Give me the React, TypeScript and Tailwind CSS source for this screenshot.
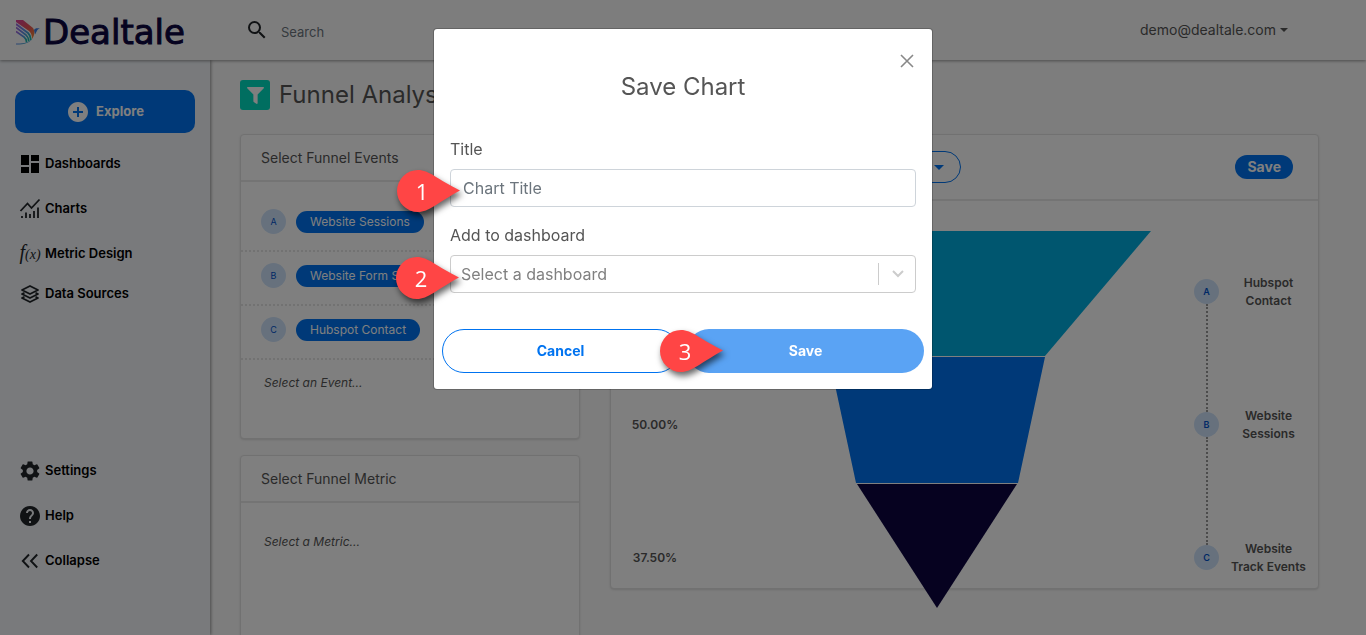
import type { ReactNode } from "react";
import { FaFilter } from "react-icons/fa";
import { MdAddCircle, MdDashboard, MdHelp, MdSearch, MdSettings } from "react-icons/md";

const events = [
  { key: "A", name: "Website Sessions" },
  { key: "B", name: "Website Form Submit" },
  { key: "C", name: "Hubspot Contact" },
];

const steps = [
  { key: "A", name: ["Hubspot", "Contact"], percent: "100.00%" },
  { key: "B", name: ["Website", "Sessions"], percent: "50.00%" },
  { key: "C", name: ["Website", "Track Events"], percent: "37.50%" },
];

function Caret({ className }: { className: string }) {
  return (
    <svg viewBox="0 0 8 4" className={className} fill="currentColor" aria-hidden="true">
      <path d="M0 0h8L4 4z" />
    </svg>
  );
}

function ChartsIcon() {
  return (
    <svg width="24" height="24" viewBox="0 0 24 24" fill="none" stroke="currentColor" aria-hidden="true">
      <path d="M2.5 14 9.5 6.5l4 4.5 8-8.5" strokeWidth="1.8" />
      <path d="M4 19v2M8 15.5v5.5M12 17v4M16 14v7M20 10.5v10.5" strokeWidth="1.8" />
    </svg>
  );
}

function LayersIcon() {
  return (
    <svg width="24" height="24" viewBox="0 0 24 24" fill="none" stroke="currentColor" strokeWidth="1.8" strokeLinejoin="round" aria-hidden="true">
      <path d="M12 4l8 4-8 4-8-4z" />
      <path d="M6.500 10.800 4 12l8 4 8-4-2.500-1.200" />
      <path d="M6.500 14.800 4 16l8 4 8-4-2.500-1.200" />
    </svg>
  );
}

function CollapseIcon() {
  return (
    <svg width="24" height="24" viewBox="0 0 24 24" fill="none" stroke="currentColor" strokeWidth="1.9" aria-hidden="true">
      <path d="M11 5.500 4.800 12l6.200 6.500M19.200 5.500 13 12l6.200 6.500" />
    </svg>
  );
}

function Bird() {
  return (
    <svg width="24" height="25" viewBox="0 0 24 25" fill="none" aria-hidden="true">
      <defs>
        <linearGradient id="wing" x1="0" y1="0" x2="1" y2="1">
          <stop offset="0" stopColor="#d83f9c" />
          <stop offset="0.5" stopColor="#e8505a" />
          <stop offset="1" stopColor="#f08a2c" />
        </linearGradient>
        <linearGradient id="feather" x1="0" y1="0" x2="1" y2="1">
          <stop offset="0" stopColor="#a35fd8" />
          <stop offset="0.5" stopColor="#5a8fe8" />
          <stop offset="1" stopColor="#12bfa0" />
        </linearGradient>
      </defs>
      <path d="M0 0h7l10 8c2 3 2 7-1 11 0-4-1-6-3-8L0 2z" fill="url(#wing)" />
      <path d="M0 4l12 9c2 2 3 4 2.500 7" stroke="url(#feather)" strokeWidth="1.8" />
      <path d="M0 7.500l10 7.500c2 2 3 3 2.500 6" stroke="url(#feather)" strokeWidth="1.7" />
      <path d="M0 11.500l8 5.500c2 1.500 2.500 2.500 2.500 5" stroke="url(#feather)" strokeWidth="1.6" />
      <path d="M0 23.500c5 0 12 0 16-5-2 4-7 6-16 6z" fill="url(#feather)" />
      <path d="M18 10c1-2 3-2 6-1.500-3 .5-3 3-5 6z" fill="#3f7fe0" />
    </svg>
  );
}

function NavItem({ icon, label, short }: { icon: ReactNode; label: string; short?: boolean }) {
  return (
    <a href="#" className={`flex items-center gap-[3px] pl-[18px] text-[13px] font-semibold text-black ${short ? "h-[35px]" : "h-[45px]"}`}>
      <span className="flex w-6 justify-center text-[#212529]">{icon}</span>
      {label}
    </a>
  );
}

function Badge({ children, className = "" }: { children: ReactNode; className?: string }) {
  return (
    <span className={`flex size-[25px] shrink-0 items-center justify-center rounded-full bg-[#cfe3fb] text-[9px] text-[#0052cc] ${className}`}>
      {children}
    </span>
  );
}

function Callout({ n, className }: { n: number; className: string }) {
  return (
    <div className={`absolute h-[42px] w-[63px] ${className}`}>
      <svg viewBox="0 0 63 42" className="size-full overflow-visible drop-shadow-[2px_4px_3px_rgba(0,0,0,0.6)]" aria-hidden="true">
        <path d="M21 0C32 0 40 9 63 20.500 40 33 32 42 21 42A21 21 0 0 1 21 0z" fill="#ff4545" />
      </svg>
      <span className="absolute inset-y-0 left-0 flex w-[50px] items-center justify-center font-['Open_Sans',sans-serif] text-[22px] text-white">
        {n}
      </span>
    </div>
  );
}

function Header() {
  return (
    <header className="relative z-10 flex h-[60px] items-center bg-[#fbfbfb] pr-[78px] shadow-[0_1px_3px_rgba(0,0,0,0.4)]">
      <a href="#" className="flex w-[245px] items-center gap-[3px] pt-1 pl-4 font-['DejaVu_Sans',sans-serif] text-[34px] text-[#0d0640] [-webkit-text-stroke:1px_#0d0640]">
        <Bird />
        Dealtale
      </a>
      <label htmlFor="search" className="text-2xl text-[#212529]">
        <MdSearch />
      </label>
      <input id="search" type="text" placeholder="Search" className="ml-3 w-[300px] bg-transparent pt-1.5 text-[13px] outline-none placeholder:text-[#6c757d]" />
      <button className="ml-auto flex items-center gap-1 text-sm text-[#555]">
        demo@dealtale.com
        <Caret className="w-2" />
      </button>
    </header>
  );
}

function Sidebar() {
  return (
    <nav className="flex w-[210px] shrink-0 flex-col bg-[#f2f5f9] pt-[30px] pb-[52px] shadow-[1px_0_3px_rgba(0,0,0,0.4)]">
      <button className="mx-[15px] mb-2 flex h-[43px] shrink-0 items-center justify-center gap-[6px] rounded-[10px] bg-[#0073f0] text-[13px] font-bold text-white">
        <MdAddCircle className="text-2xl" />
        Explore
      </button>
      <NavItem icon={<MdDashboard className="size-6 text-black" />} label="Dashboards" />
      <NavItem icon={<ChartsIcon />} label="Charts" />
      <NavItem
        icon={<span className="font-['Liberation_Serif',serif] text-xl leading-none font-normal italic">f<span className="text-sm">(x)</span></span>}
        label="Metric Design"
      />
      <NavItem icon={<LayersIcon />} label="Data Sources" short />
      <div className="mt-auto">
        <NavItem icon={<MdSettings className="size-6" />} label="Settings" />
        <NavItem icon={<MdHelp className="size-6" />} label="Help" />
        <NavItem icon={<CollapseIcon />} label="Collapse" />
      </div>
    </nav>
  );
}

function FunnelChart() {
  return (
    <div className="flex items-start pt-6 pr-3">
      <ul className="w-[88px] text-center text-xs font-semibold text-[#555]">
        {steps.map((s) => (
          <li key={s.key} className="flex h-[133px] items-center justify-center">{s.percent}</li>
        ))}
      </ul>
      <svg viewBox="0 0 428 377" className="mt-[6px] mr-[43px] ml-6 h-[377px] min-w-0 flex-1" role="img" aria-label="Funnel">
        <path d="M0 0h428L322 125H106z" fill="#00acdf" />
        <path d="M106 126h216l-27 126H133z" fill="#0073f0" />
        <path d="M134 253h160L214 377z" fill="#0d0540" />
      </svg>
      <ol className="text-xs font-semibold text-[#555]">
        {steps.map((s, i) => (
          <li key={s.key} className="flex h-[133px] items-center gap-3">
            <Badge
              className={
                i < steps.length - 1
                  ? "relative after:absolute after:top-full after:left-3 after:h-[108px] after:border-l-2 after:border-dotted after:border-[#999]"
                  : ""
              }
            >
              {s.key}
            </Badge>
            <span className="w-[75px] text-center leading-[18px] whitespace-nowrap">
              {s.name[0]}
              <br />
              {s.name[1]}
            </span>
          </li>
        ))}
      </ol>
    </div>
  );
}

function SaveDialog() {
  return (
    <div className="fixed inset-0 z-20 flex items-start justify-center bg-black/50 pt-7">
      <div role="dialog" aria-labelledby="dialog-title" className="relative w-[500px] rounded border border-black/20 bg-white bg-clip-padding pb-4 text-[#555]">
        <div className="flex justify-end pt-[25px] pr-[18px]">
          <button aria-label="Close" className="text-[#888]">
            <svg width="14" height="14" viewBox="0 0 14 14" stroke="currentColor" strokeWidth="1.6" aria-hidden="true">
              <path d="M1 1l12 12M13 1 1 13" />
            </svg>
          </button>
        </div>
        <h2 id="dialog-title" className="mt-[3px] text-center text-2xl">Save Chart</h2>
        <form className="mt-[34px]">
          <div className="px-4">
            <label htmlFor="title" className="block">Title</label>
            <input
              id="title"
              type="text"
              placeholder="Chart Title"
              className="mt-2 block h-[38px] w-full rounded border border-[#ced4da] px-3 outline-none placeholder:text-[#6c757d]"
            />
            <label htmlFor="dashboard" className="mt-4 block">Add to dashboard</label>
            <div className="relative mt-2">
              <select id="dashboard" className="block h-[38px] w-full appearance-none rounded border border-[#ccc] bg-white px-[10px] text-[#808080] outline-none">
                <option>Select a dashboard</option>
              </select>
              <span className="pointer-events-none absolute inset-y-2 right-0 flex w-[38px] items-center justify-center border-l border-[#ccc] text-[#ccc]">
                <svg width="12" height="8" viewBox="0 0 12 8" fill="none" stroke="currentColor" strokeWidth="2" aria-hidden="true">
                  <path d="M1 1l5 5 5-5" />
                </svg>
              </span>
            </div>
          </div>
          <div className="mt-9 grid grid-cols-2 gap-2 px-2 text-sm font-bold">
            <button type="button" className="h-11 rounded-full border border-[#0073f0] text-[#0073f0]">Cancel</button>
            <button type="submit" className="h-11 rounded-full bg-[#5aa3f4] text-white">Save</button>
          </div>
        </form>
        {/* numbered steps */}
        <Callout n={1} className="top-[141px] -left-[37px]" />
        <Callout n={2} className="top-[228px] -left-[38px]" />
        <Callout n={3} className="top-[301px] left-[226px]" />
      </div>
    </div>
  );
}

export default function App() {
  return (
    <div className="flex h-screen flex-col overflow-hidden bg-[#fbfbfb] font-['Inter',sans-serif]">
      <Header />
      <div className="flex min-h-0 flex-1">
        <Sidebar />
        <main className="min-w-0 flex-1 overflow-hidden pt-5 pr-[47px] pl-[30px] text-[#555]">
          <h1 className="flex items-center gap-[9px] text-2xl leading-[30px]">
            <span className="flex size-[30px] items-center justify-center rounded-[3px] bg-[#00dcc0] text-white">
              <FaFilter className="size-[17px]" />
            </span>
            Funnel Analysis
          </h1>
          <div className="mt-6 flex items-start gap-[30px]">
            <div className="flex w-[340px] shrink-0 flex-col gap-4">
              <section className="h-[305px] rounded border border-[#e2e2e2] bg-white shadow-sm">
                <h2 className="flex h-[47px] items-center border-b-2 border-[#e8e8e8] px-5 text-sm">Select Funnel Events</h2>
                <ul className="mt-4">
                  {events.map((e) => (
                    <li key={e.key} className="flex items-center gap-[10px] border-b-2 border-dotted border-[#e4e4e4] px-5 pt-[11px] pb-4">
                      <Badge>{e.key}</Badge>
                      <span className="h-[22px] rounded-full bg-[#0073f0] px-[14px] text-xs leading-[22px] text-white">{e.name}</span>
                    </li>
                  ))}
                </ul>
                <p className="px-[23px] pt-[15px] text-xs italic">Select an Event...</p>
              </section>
              <section className="h-[305px] rounded border border-[#e2e2e2] bg-white shadow-sm">
                <h2 className="flex h-[47px] items-center border-b-2 border-[#e8e8e8] px-5 text-sm">Select Funnel Metric</h2>
                <p className="px-[23px] pt-[31px] text-xs italic">Select a Metric...</p>
              </section>
            </div>
            <section className="h-[455px] min-w-0 flex-1 rounded border border-[#e2e2e2] bg-white shadow-sm">
              <div className="flex h-[66px] items-center justify-between border-b-2 border-[#e8e8e8] pr-[25px] pl-5">
                <button aria-label="Chart type" className="flex h-8 w-[330px] items-center justify-end rounded-full border border-[#0073f0] pr-4 text-[#0073f0]">
                  <Caret className="w-[10px]" />
                </button>
                <button className="h-6 rounded-full bg-[#0073f0] px-3 text-sm font-bold text-white">Save</button>
              </div>
              <FunnelChart />
            </section>
          </div>
        </main>
      </div>
      <SaveDialog />
    </div>
  );
}
